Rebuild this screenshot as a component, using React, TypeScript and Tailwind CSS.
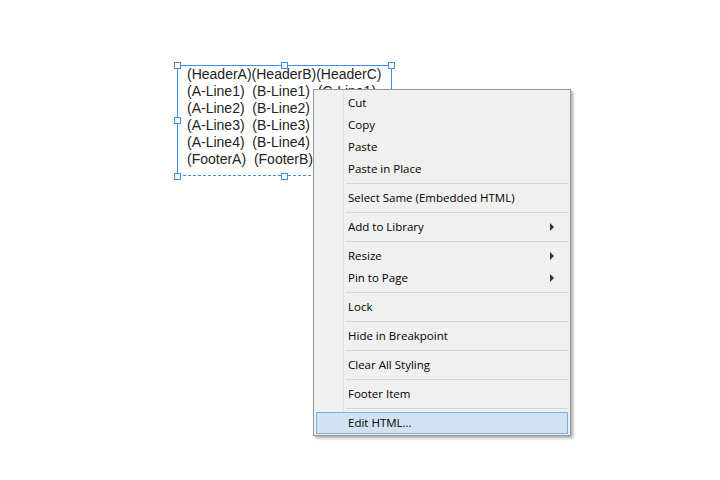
import React from 'react';

type Item = { label: string; sub?: boolean; active?: boolean } | 'sep';

const items: Item[] = [
  { label: 'Cut' },
  { label: 'Copy' },
  { label: 'Paste' },
  { label: 'Paste in Place' },
  'sep',
  { label: 'Select Same (Embedded HTML)' },
  'sep',
  { label: 'Add to Library', sub: true },
  'sep',
  { label: 'Resize', sub: true },
  { label: 'Pin to Page', sub: true },
  'sep',
  { label: 'Lock' },
  'sep',
  { label: 'Hide in Breakpoint' },
  'sep',
  { label: 'Clear All Styling' },
  'sep',
  { label: 'Footer Item' },
  'sep',
  { label: 'Edit HTML...', active: true },
];

const lines = [
  '(HeaderA)(HeaderB)(HeaderC)',
  '(A-Line1)  (B-Line1)  (C-Line1)',
  '(A-Line2)  (B-Line2)',
  '(A-Line3)  (B-Line3)',
  '(A-Line4)  (B-Line4)',
  '(FooterA)  (FooterB)',
];

const Handle = ({ cls }: { cls: string }) => (
  <div className={`absolute w-[7px] h-[7px] bg-white border border-[#3d8fe6] ${cls}`} />
);

const App = () => {
  return (
    <div className="relative w-[720px] h-[480px] bg-white overflow-hidden">
      {/* selected element */}
      <div className="absolute left-[177px] top-[65px] w-[215px] h-[111px] border-x border-t border-[#3d8fe6]">
        <div className="absolute inset-x-0 bottom-0 border-b border-dashed border-[#3d8fe6]" />
        <div
          className="pl-[9px] pt-0 text-[14px] leading-[17px] text-[#222] whitespace-pre"
          style={{ fontFamily: '"Liberation Sans", Arial, sans-serif' }}
        >
          {lines.map((l) => (
            <div key={l}>{l}</div>
          ))}
        </div>
        <Handle cls="left-[-4px] top-[-4px]" />
        <Handle cls="left-[103px] top-[-4px]" />
        <Handle cls="right-[-4px] top-[-4px]" />
        <Handle cls="left-[-4px] top-[51px]" />
        <Handle cls="left-[-4px] bottom-[-4px]" />
        <Handle cls="left-[103px] bottom-[-4px]" />
      </div>

      {/* context menu */}
      <div
        className="absolute left-[313px] top-[89px] w-[258px] bg-[#f0f0f0] border border-[#979797] shadow-[2px_2px_3px_rgba(0,0,0,0.35)] pt-[2px] pb-[1px] px-[2px] text-[11.5px] text-black"
        style={{ fontFamily: '"Open Sans", "Noto Sans", sans-serif' }}
      >
        <div className="absolute left-[29px] top-0 bottom-0 border-l border-[#e2e2e2]" />
        {items.map((it, i) =>
          it === 'sep' ? (
            <div key={i} className="h-[7px] flex items-center pl-[30px]">
              <div className="w-full border-t border-[#d7d7d7]" />
            </div>
          ) : (
            <div
              key={i}
              className={`relative h-[22px] flex items-center pl-[31px] pr-2 border ${
                it.active ? 'bg-[#d1e2f2] border-[#7ab0e3]' : 'border-transparent'
              }`}
            >
              <span className="flex-1">{it.label}</span>
              {it.sub && (
                <svg width="5" height="8" viewBox="0 0 5 8" className="mr-[4px]">
                  <path d="M0 0 L4 4 L0 8 Z" fill="#333" />
                </svg>
              )}
            </div>
          )
        )}
      </div>
    </div>
  );
};

export default App;
